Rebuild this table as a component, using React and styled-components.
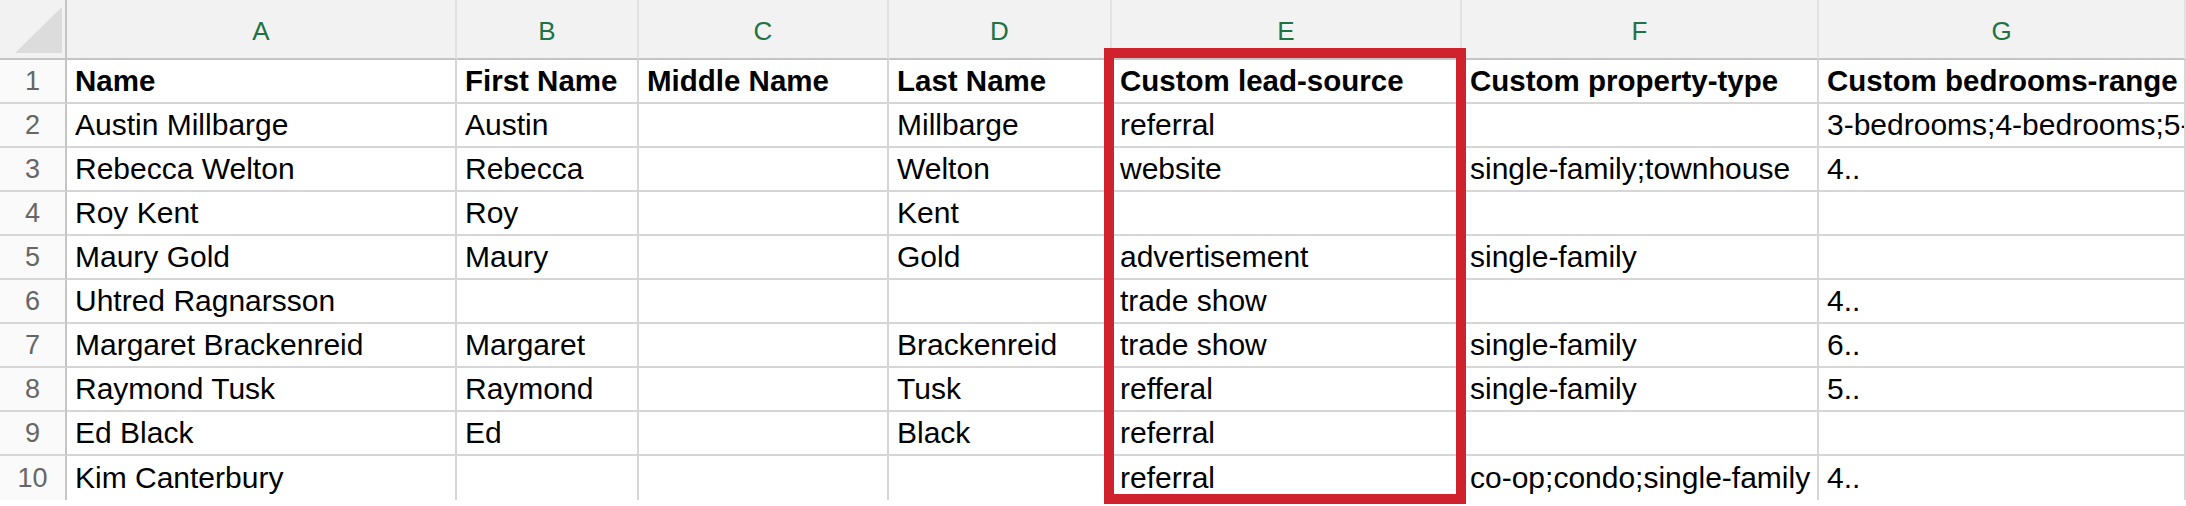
import styled, { createGlobalStyle } from 'styled-components';

const GlobalStyle = createGlobalStyle`
  html, body {
    margin: 0;
    padding: 0;
    background: #ffffff;
    overflow: hidden;
  }
  body {
    font-family: "Liberation Sans", Arial, sans-serif;
    color: #000000;
  }
`;

const columns = ['A', 'B', 'C', 'D', 'E', 'F', 'G'];

const rows = [
  ['Name', 'First Name', 'Middle Name', 'Last Name', 'Custom lead-source', 'Custom property-type', 'Custom bedrooms-range'],
  ['Austin Millbarge', 'Austin', '', 'Millbarge', 'referral', '', '3-bedrooms;4-bedrooms;5-bedrooms'],
  ['Rebecca Welton', 'Rebecca', '', 'Welton', 'website', 'single-family;townhouse', '4..'],
  ['Roy Kent', 'Roy', '', 'Kent', '', '', ''],
  ['Maury Gold', 'Maury', '', 'Gold', 'advertisement', 'single-family', ''],
  ['Uhtred Ragnarsson', '', '', '', 'trade show', '', '4..'],
  ['Margaret Brackenreid', 'Margaret', '', 'Brackenreid', 'trade show', 'single-family', '6..'],
  ['Raymond Tusk', 'Raymond', '', 'Tusk', 'refferal', 'single-family', '5..'],
  ['Ed Black', 'Ed', '', 'Black', 'referral', '', ''],
  ['Kim Canterbury', '', '', '', 'referral', 'co-op;condo;single-family', '4..'],
];

const App = () => {
  return (
    <>
      <GlobalStyle />
      <Page>
        <Sheet>
          <Corner>
            <svg width="67" height="60" viewBox="0 0 67 60">
              <polygon points="15,53 62,53 62,7" fill="#dcdcdc" />
            </svg>
          </Corner>
          {columns.map((c) => (
            <ColHeader key={c}>{c}</ColHeader>
          ))}
          {rows.map((row, i) => (
            <Row key={i} $last={i === rows.length - 1}>
              <RowHeader>{i + 1}</RowHeader>
              {row.map((value, j) => (
                <Cell key={j} $bold={i === 0}>{value}</Cell>
              ))}
            </Row>
          ))}
        </Sheet>
        <Highlight />
      </Page>
    </>
  );
};

export default App;

const Page = styled.div`
  position: relative;
  width: 2186px;
  height: 506px;
  overflow: hidden;
`;

const Sheet = styled.div`
  display: grid;
  grid-template-columns: 67px 390px 182px 250px 223px 350px 357px 1fr;
  grid-template-rows: 60px repeat(10, 44px);
  width: 2186px;
`;

const Corner = styled.div`
  background: #f2f2f2;
  border-right: 2px solid #c4c4c4;
  border-bottom: 2px solid #c4c4c4;
  box-sizing: border-box;
  overflow: hidden;
  svg {
    display: block;
  }
`;

const ColHeader = styled.div`
  display: flex;
  align-items: center;
  justify-content: center;
  padding-top: 5px;
  box-sizing: border-box;
  background: #f2f2f2;
  border-right: 2px solid #e2e2e2;
  border-bottom: 2px solid #c4c4c4;
  color: #1f7244;
  font-size: 26px;
`;

const Row = styled.div`
  display: contents;
  & > div {
    border-bottom: ${(p) => (p.$last ? 'none' : '2px solid #d6d6d6')};
  }
`;

const RowHeader = styled.div`
  display: flex;
  align-items: center;
  justify-content: center;
  box-sizing: border-box;
  background: #fafafa;
  border-right: 2px solid #c4c4c4;
  color: #666666;
  font-size: 27px;
  padding-top: 1px;
`;

const Cell = styled.div`
  display: flex;
  align-items: center;
  box-sizing: border-box;
  padding: 0 8px;
  border-right: 2px solid #d6d6d6;
  white-space: nowrap;
  overflow: hidden;
  font-size: ${(p) => (p.$bold ? '29.5px' : '30px')};
  font-weight: ${(p) => (p.$bold ? 700 : 400)};
  background: #ffffff;
`;

const Highlight = styled.div`
  position: absolute;
  left: 1104px;
  top: 48px;
  width: 362px;
  height: 456px;
  box-sizing: border-box;
  border: 10px solid #cf222c;
  pointer-events: none;
`;
